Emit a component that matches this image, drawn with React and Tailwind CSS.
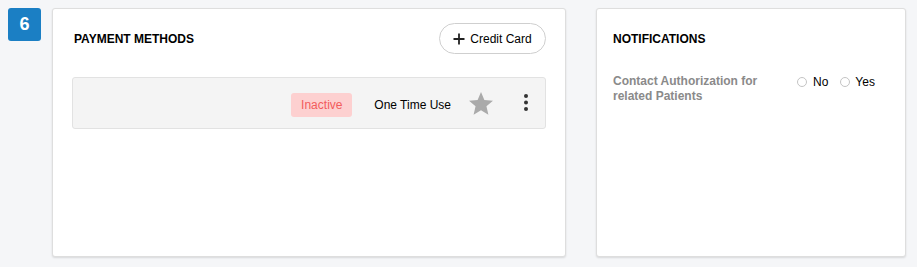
export default function App() {
  return (
    <div className="w-[917px] h-[267px] bg-[#f5f6f8] flex items-start pt-2 pl-2 font-['Liberation_Sans',Arial,sans-serif] text-[#111]">
      <div className="w-[33px] h-[33px] bg-[#1b7fc4] rounded-[3px] text-white font-bold text-[18px] flex items-center justify-center">
        6
      </div>

      <div className="ml-[11px] w-[514px] h-[249px] bg-white border border-[#dedede] rounded-[3px] shadow-[0_1px_2px_rgba(0,0,0,0.12)] pt-[14px] px-[19px]">
        <div className="flex items-center justify-between h-[31px]">
          <div className="pl-[2px] text-[12px] font-bold text-black">PAYMENT METHODS</div>
          <button className="h-[31px] w-[107px] rounded-full border border-[#cfcfcf] bg-white flex items-center justify-center gap-[5px] text-[12px] text-black">
            <svg width="12" height="12" viewBox="0 0 12 12">
              <path d="M6 0.5V11.5M0.5 6H11.5" stroke="#222" strokeWidth="1.8" />
            </svg>
            <span>Credit Card</span>
          </button>
        </div>

        <div className="mt-[23px] h-[52px] bg-[#f4f4f4] border border-[#e2e2e2] rounded-[3px] flex items-center justify-end pr-[17px]">
          <div className="w-[61px] h-[24px] rounded-[3px] bg-[#fdd0d0] text-[#f25c5c] text-[12px] flex items-center justify-center mt-[3px]">
            Inactive
          </div>
          <div className="ml-[22px] mr-[1px] text-[12px] text-black mt-[4px]">One Time Use</div>
          <svg className="ml-[17px]" width="24" height="23" viewBox="2 2 20 19.2">
            <path d="M12 17.27L18.18 21l-1.64-7.03L22 9.24l-7.19-.61L12 2 9.19 8.63 2 9.24l5.46 4.73L5.82 21z" fill="#aaaaaa" />
          </svg>
          <svg className="ml-[31px]" width="4" height="18" viewBox="0 0 4 18">
            <circle cx="2" cy="2" r="2" fill="#333" />
            <circle cx="2" cy="8.5" r="2" fill="#333" />
            <circle cx="2" cy="15" r="2" fill="#333" />
          </svg>
        </div>
      </div>

      <div className="ml-[30px] w-[310px] h-[249px] bg-white border border-[#dedede] rounded-[3px] shadow-[0_1px_2px_rgba(0,0,0,0.12)] pt-[14px] px-[16px]">
        <div className="flex items-center h-[31px]">
          <div className="text-[12px] font-bold text-black">NOTIFICATIONS</div>
        </div>
        <div className="mt-[20px] flex items-start">
          <div className="w-[184px] text-[12px] leading-[15px] font-bold text-[#8a8a8a]">
            Contact Authorization for related Patients
          </div>
          <div className="flex items-center h-[15px] text-[12px] text-black">
            <span className="w-[10px] h-[10px] rounded-full border border-[#c4c4c4] bg-white"></span>
            <span className="ml-[6px]">No</span>
            <span className="ml-[12px] w-[10px] h-[10px] rounded-full border border-[#c4c4c4] bg-white"></span>
            <span className="ml-[5px]">Yes</span>
          </div>
        </div>
      </div>
    </div>
  );
}
